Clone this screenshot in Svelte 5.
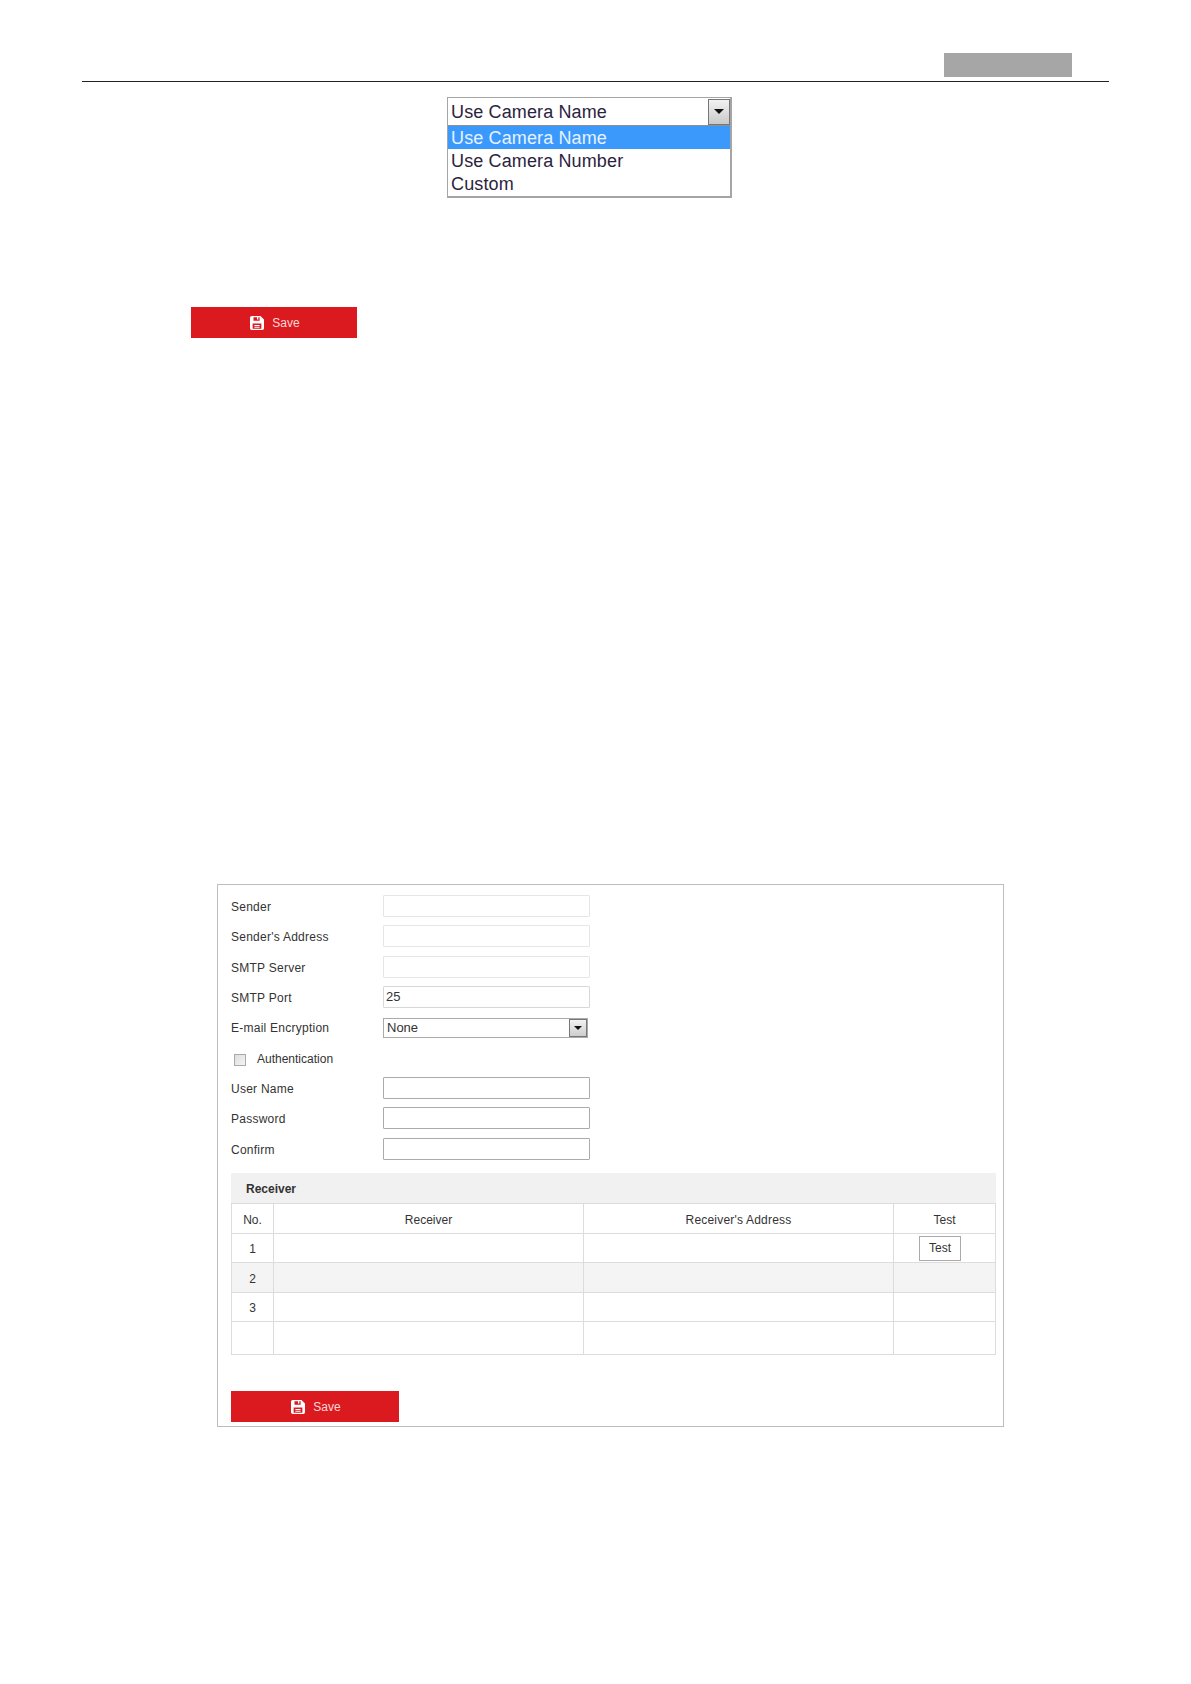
<script>
  // form rows above the authentication checkbox
  const topRows = [
    { label: 'Sender', value: '', tone: 'faint' },
    { label: "Sender's Address", value: '', tone: 'faint' },
    { label: 'SMTP Server', value: '', tone: 'faint' },
    { label: 'SMTP Port', value: '25', tone: 'light' }
  ];
  const authRows = ['User Name', 'Password', 'Confirm'];
  const cameraOptions = ['Use Camera Name', 'Use Camera Number', 'Custom'];
  const floppy = 'M2 0h10l4 4v10a2 2 0 0 1-2 2H2a2 2 0 0 1-2-2V2a2 2 0 0 1 2-2zM4 1.500v4h7v-4h-1.500v2.500H8v-2.500zM3 8.500v6h10v-6zM5 10.300h6v1.100H5zM5 12.300h6v1.100H5z';
</script>

<div class="page">
  <header class="top">
    <div class="tag"></div>
  </header>

  <div class="camera-wrap">
    <div class="camera">
      <div class="camera-head">
        <span class="camera-value">Use Camera Name</span>
        <div class="camera-arrow"><i></i></div>
      </div>
      {#each cameraOptions as opt, i}
        <div class="camera-opt" class:active={i === 0}>{opt}</div>
      {/each}
    </div>
  </div>

  <button class="save first">
    <svg viewBox="0 0 16 16" width="14" height="14"><path fill-rule="evenodd" d={floppy} fill="#fff" /></svg>
    <span>Save</span>
  </button>

  <section class="panel">
    {#each topRows as row}
      <div class="row">
        <span class="label">{row.label}</span>
        <input class="field {row.tone}" value={row.value} />
      </div>
    {/each}
    <div class="row">
      <span class="label">E-mail Encryption</span>
      <div class="select">
        <span>None</span>
        <div class="select-arrow"><i></i></div>
      </div>
    </div>
    <div class="row auth">
      <span class="check"></span>
      <span>Authentication</span>
    </div>
    {#each authRows as label}
      <div class="row">
        <span class="label">{label}</span>
        <input class="field" />
      </div>
    {/each}

    <div class="receiver-title">Receiver</div>
    <table>
      <thead>
        <tr>
          <th class="no">No.</th>
          <th class="name">Receiver</th>
          <th class="addr">Receiver's Address</th>
          <th>Test</th>
        </tr>
      </thead>
      <tbody>
        <tr class="one">
          <td>1</td><td></td><td></td>
          <td class="test-cell"><button class="test">Test</button></td>
        </tr>
        <tr class="alt"><td>2</td><td></td><td></td><td></td></tr>
        <tr class="one"><td>3</td><td></td><td></td><td></td></tr>
        <tr class="tail"><td></td><td></td><td></td><td></td></tr>
      </tbody>
    </table>

    <button class="save second">
      <svg viewBox="0 0 16 16" width="14" height="14"><path fill-rule="evenodd" d={floppy} fill="#fff" /></svg>
      <span>Save</span>
    </button>
  </section>
</div>

<style>
  :global(body) {
    background: #fff;
  }

  .page {
    width: 1191px;
    height: 1684px;
    box-sizing: border-box;
    font-family: "Liberation Sans", Arial, sans-serif;
    color: #333;
    overflow: hidden;
  }

  .top {
    margin: 0 82px 0 82px;
    padding: 53px 37px 4px 0;
    border-bottom: 1px solid #222;
    display: flex;
    justify-content: flex-end;
  }

  .tag {
    width: 128px;
    height: 24px;
    background: #a6a6a6;
  }

  .camera-wrap {
    padding: 15px 0 0 447px;
  }

  .camera {
    width: 282px;
    height: 98px;
    border: 2px solid #a5a5a5;
    border-top-width: 1px;
    border-left-width: 1px;
    background: #fff;
    font-size: 18px;
    letter-spacing: 0.13px;
    color: #2b2340;
  }

  .camera-head {
    height: 27px;
    display: flex;
    align-items: center;
    justify-content: space-between;
    padding-left: 3px;
    border-bottom: 1px solid #8f8f8f;
  }

  .camera-value {
    padding-top: 2px;
  }

  .camera-arrow {
    width: 22px;
    height: 26px;
    box-sizing: border-box;
    border: 1px solid #777;
    background: linear-gradient(#f2f2f2, #c9c9c9);
    display: flex;
    align-items: center;
    justify-content: center;
  }

  .camera-arrow i {
    border: 5px solid transparent;
    border-top: 5px solid #111;
    border-bottom: 0;
  }

  .camera-opt {
    height: 23px;
    line-height: 24px;
    padding-left: 3px;
  }

  .camera-opt.active {
    background: #3c99fc;
    color: #e6f2ff;
  }

  .save {
    display: flex;
    align-items: center;
    justify-content: center;
    gap: 8px;
    height: 31px;
    padding: 0 0 0 2px;
    border: 0;
    background: #db1a20;
    color: #ffd6d6;
    font-family: inherit;
    font-size: 12px;
  }

  .save.first {
    width: 166px;
    margin: 109px 0 0 191px;
  }

  .panel {
    margin: 546px 0 0 217px;
    width: 787px;
    height: 543px;
    box-sizing: border-box;
    border: 1px solid #bdbdbd;
    padding: 10px 7px 0 13px;
    font-size: 12px;
  }

  .row {
    height: 30.300px;
    display: flex;
    align-items: flex-start;
  }

  .label {
    width: 152px;
    flex: none;
    line-height: 24px;
    letter-spacing: 0.25px;
  }

  .field {
    width: 207px;
    height: 22px;
    box-sizing: border-box;
    margin: 0;
    padding: 0 2px;
    border: 1px solid #ababab;
    border-radius: 1px;
    background: #fff;
    font-family: inherit;
    font-size: 13px;
    color: #333;
    outline: none;
  }

  .field.faint {
    border-color: #e6e6e6;
  }

  .field.light {
    border-color: #d8d8d8;
  }

  .select {
    width: 205px;
    height: 20px;
    box-sizing: border-box;
    margin-top: 2px;
    border: 1px solid #aaa;
    display: flex;
    align-items: center;
    justify-content: space-between;
    padding-left: 3px;
    font-size: 13px;
  }

  .select > span {
    padding-bottom: 2px;
  }

  .select-arrow {
    width: 18px;
    height: 18px;
    box-sizing: border-box;
    border: 1px solid #777;
    background: linear-gradient(#f2f2f2, #cdcdcd);
    display: flex;
    align-items: center;
    justify-content: center;
  }

  .select-arrow i {
    border: 4px solid transparent;
    border-top: 4px solid #111;
    border-bottom: 0;
  }

  .auth {
    align-items: center;
    height: 30.500px;
    gap: 11px;
    padding: 0 0 6px 3px;
    box-sizing: border-box;
  }

  .check {
    width: 12px;
    height: 12px;
    box-sizing: border-box;
    margin-top: 2px;
    border: 1px solid #aaa;
    background: linear-gradient(135deg, #ddd, #f4f4f4);
  }

  .receiver-title {
    margin-top: 5.500px;
    width: 765px;
    height: 30px;
    box-sizing: border-box;
    padding-left: 15px;
    line-height: 32px;
    background: #f1f1f1;
    font-weight: bold;
    color: #333;
  }

  table {
    width: 765px;
    table-layout: fixed;
    border-collapse: collapse;
    font-size: 12px;
  }

  th,
  td {
    height: 27px;
    padding: 2px 0 0;
    border: 1px solid #dcdcdc;
    font-weight: normal;
    text-align: center;
    color: #333;
  }

  th.addr {
    letter-spacing: 0.2px;
  }

  .no {
    width: 41px;
  }

  .name,
  .addr {
    width: 309px;
  }

  tr.one td {
    height: 26px;
  }

  tr.alt td {
    height: 27px;
    background: #f4f4f4;
  }

  tr.tail td {
    height: 30px;
  }

  tr.one td.test-cell {
    text-align: left;
    padding: 0 0 0 25px;
    height: 28px;
  }

  .test {
    display: block;
    width: 42px;
    height: 25px;
    padding: 0;
    border: 1px solid #aaa;
    background: #fff;
    font-family: inherit;
    font-size: 12px;
    color: #333;
  }

  .save.second {
    width: 168px;
    margin-top: 36px;
  }
</style>
